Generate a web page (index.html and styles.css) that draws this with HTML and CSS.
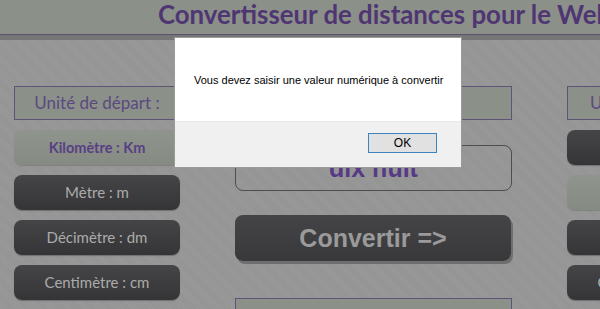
FILE: index.html
```html
<!DOCTYPE html>
<html lang="fr">
<head>
<meta charset="utf-8">
<title>Convertisseur de distances</title>
<link rel="stylesheet" href="styles.css">
</head>
<body>
<header class="top">
  <h1 class="title">Convertisseur de distances pour le Web</h1>
</header>
<div class="band"></div>
<main class="grid">
  <section class="col col-left">
    <div class="label">Unité de départ :</div>
    <div class="btn btn-sel">Kilomètre : Km</div>
    <div class="btn">Mètre : m</div>
    <div class="btn">Décimètre : dm</div>
    <div class="btn">Centimètre : cm</div>
  </section>
  <section class="col col-mid">
    <div class="label"></div>
    <div class="field">dix huit</div>
    <div class="convert">Convertir =&gt;</div>
    <div class="result"></div>
  </section>
  <section class="col col-right">
    <div class="label">Unité d'arrivée :</div>
    <div class="btn">Kilomètre : Km</div>
    <div class="btn btn-sel">Mètre : m</div>
    <div class="btn">Décimètre : dm</div>
    <div class="btn">Centimètre : cm</div>
  </section>
</main>
<div class="dialog">
  <div class="dialog-body">Vous devez saisir une valeur numérique à convertir</div>
  <div class="dialog-foot"><button class="ok">OK</button></div>
</div>
</body>
</html>
```

FILE: styles.css
```css
html, body {
  margin: 0;
  padding: 0;
}
body {
  width: 600px;
  height: 309px;
  overflow: hidden;
  background-color: #979797;
  background-image: repeating-linear-gradient(45deg, rgba(255,255,255,0.025) 0 1px, rgba(0,0,0,0.025) 1px 2px);
  font-family: Lato, "Liberation Sans", sans-serif;
  position: relative;
}
.top {
  height: 34px;
  background: #8b9089;
  border-bottom: 1px solid #5b5272;
  overflow: hidden;
}
.title {
  margin: 0;
  padding-left: 158px;
  white-space: nowrap;
  font-family: Lato, sans-serif;
  font-weight: 700;
  font-size: 25.8px;
  line-height: 29px;
  color: #4f3673;
}
.band {
  height: 5px;
  background: #767676;
}
.grid {
  display: grid;
  grid-template-columns: 166px 277px 166px;
  column-gap: 55px;
  padding: 46px 0 0 14px;
}
.col {
  display: flex;
  flex-direction: column;
}
.label {
  height: 32px;
  border: 1px solid #5e5478;
  background: #8b9089;
  color: #5a4a80;
  font-size: 17px;
  line-height: 32px;
  text-align: center;
  white-space: nowrap;
  overflow: hidden;
  margin-bottom: 10px;
}
.col-right .label {
  text-align: left;
  padding-left: 22px;
}
.btn {
  height: 35px;
  border-radius: 8px;
  background: linear-gradient(#454547, #353537);
  color: #ababab;
  font-size: 15px;
  line-height: 35px;
  text-align: center;
  margin-bottom: 10px;
  white-space: nowrap;
  box-shadow: 0 1px 1px rgba(0,0,0,0.25);
}
.btn-sel {
  background: linear-gradient(#8f948c, #858a83);
  color: #583f85;
  font-weight: 700;
  font-size: 14.5px;
  box-shadow: 0 1px 1px rgba(0,0,0,0.15);
}
.field {
  margin-top: 15px;
  height: 44px;
  border: 1px solid #4e4e4e;
  border-radius: 8px;
  font-family: "Liberation Sans", sans-serif;
  font-weight: 700;
  font-size: 25px;
  line-height: 44px;
  color: #563a86;
  text-align: center;
}
.convert {
  margin-top: 24px;
  width: 276px;
  height: 46px;
  border-radius: 8px;
  background: linear-gradient(#444446, #39393b);
  box-shadow: 2px 3px 0 #6e6e6e;
  font-family: "Liberation Sans", sans-serif;
  font-weight: 700;
  font-size: 25px;
  line-height: 46px;
  color: #9a9a9a;
  text-align: center;
}
.result {
  margin-top: 37px;
  height: 30px;
  border: 1px solid #5e5478;
  background: #8b9089;
}
.dialog {
  position: absolute;
  left: 174px;
  top: 37px;
  width: 286px;
  height: 129px;
  border: 1px solid #9a9a9a;
  background: #fff;
  display: flex;
  flex-direction: column;
  font-family: "Liberation Sans", sans-serif;
}
.dialog-body {
  height: 83px;
  background: #fff;
  font-size: 11px;
  color: #000;
  padding: 36px 0 0 19px;
  box-sizing: border-box;
  white-space: nowrap;
}
.dialog-foot {
  flex: 1;
  background: #f0f0f0;
  border-top: 1px solid #e8e8e8;
  display: flex;
  justify-content: flex-end;
  align-items: flex-start;
  padding: 11px 24px 0 0;
}
.ok {
  width: 69px;
  height: 20px;
  border: 1px solid #3b84c0;
  background: #e1e1e1;
  font-family: "Liberation Sans", sans-serif;
  font-size: 12px;
  color: #000;
  padding: 0;
  margin: 0;
}
```
